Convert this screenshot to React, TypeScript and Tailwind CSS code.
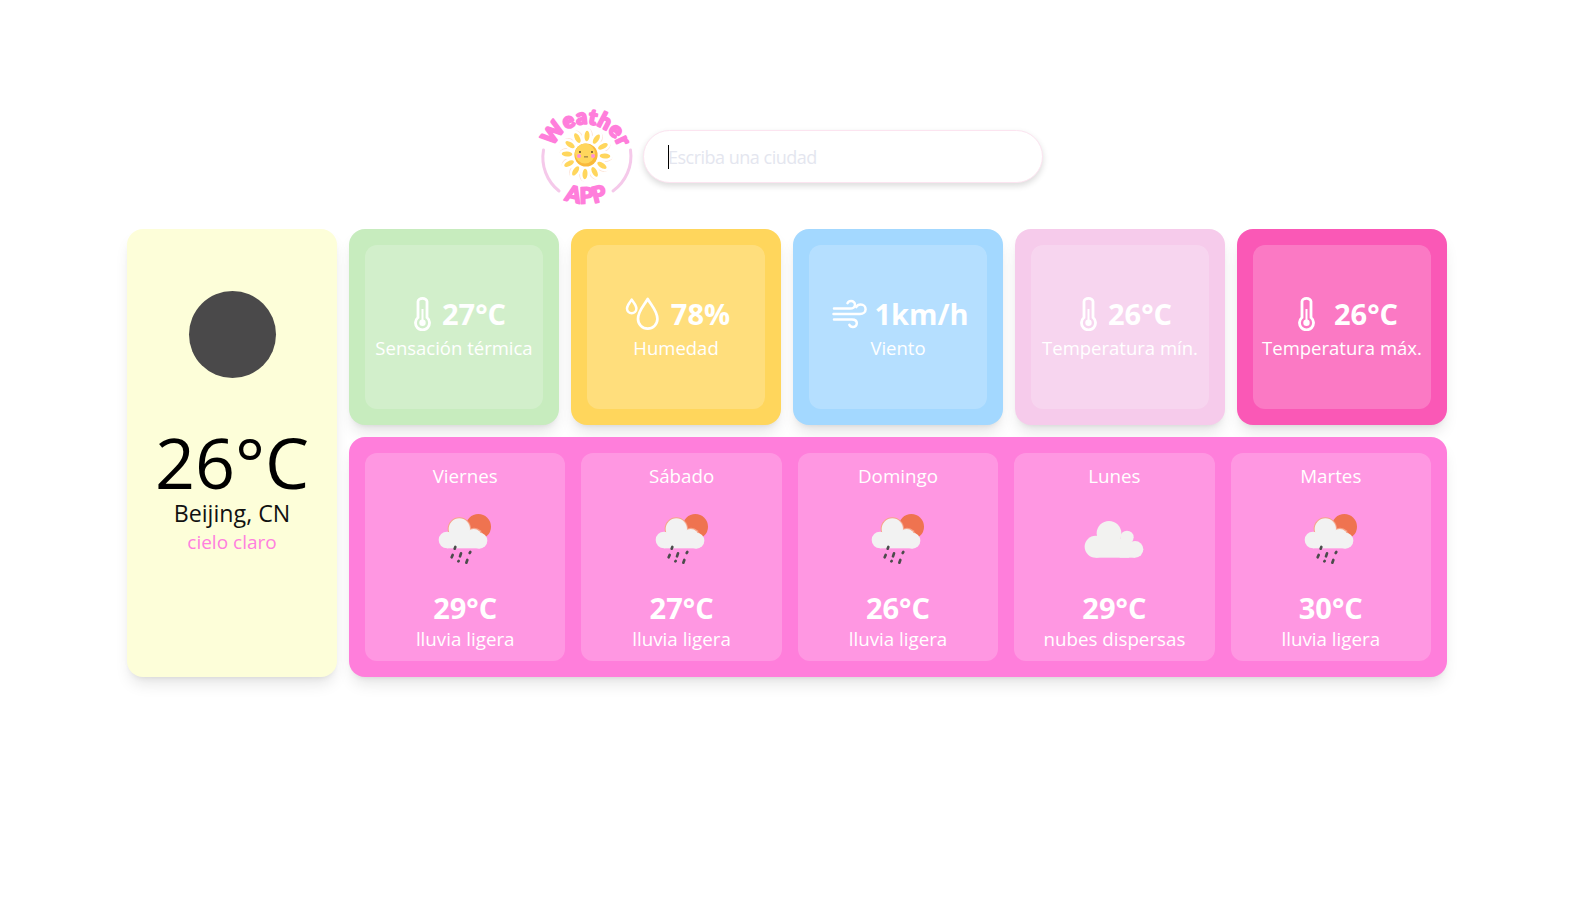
import React from "react";

const stats = [
  { icon: "thermo", value: "27°C", label: "Sensación térmica", bg: "bg-[#c7ecbe]" },
  { icon: "drops", value: "78%", label: "Humedad", bg: "bg-[#ffd65c]" },
  { icon: "wind", value: "1km/h", label: "Viento", bg: "bg-[#a3d8ff]" },
  { icon: "thermo", value: "26°C", label: "Temperatura mín.", bg: "bg-[#f6cbeb]" },
  { icon: "thermoMax", value: "26°C", label: "Temperatura máx.", bg: "bg-[#fa58b6]" },
];

const forecast = [
  { day: "Viernes", temp: "29°C", desc: "lluvia ligera", icon: "rain" },
  { day: "Sábado", temp: "27°C", desc: "lluvia ligera", icon: "rain" },
  { day: "Domingo", temp: "26°C", desc: "lluvia ligera", icon: "rain" },
  { day: "Lunes", temp: "29°C", desc: "nubes dispersas", icon: "cloud" },
  { day: "Martes", temp: "30°C", desc: "lluvia ligera", icon: "rain" },
];

const Thermo = ({ width }: { width: number }) => (
  <svg width={width} height="34" viewBox={`0 0 ${width} 34`} fill="none" className="block">
    <path d="M16 4.600a4.500 3.200 0 0 1 9 0V20.500a7 7 0 1 1 -9 0Z" stroke="white" strokeWidth="2.800" />
    <circle cx="20.500" cy="25.800" r="3.200" fill="white" />
    <rect x="19.500" y="12" width="2" height="12" fill="white" />
  </svg>
);

const StatIcon = ({ name }: { name: string }) => {
  if (name === "thermo") return <Thermo width={40} />;
  if (name === "thermoMax") return <Thermo width={48} />;
  if (name === "drops") {
    return (
      <svg width="49" height="34" viewBox="0 0 49 34" fill="none" className="block">
        <path d="M25.700 2C22 8.500 16 14 16 22a9.700 9.700 0 0 0 19.400 0C35.400 14 29.400 8.500 25.700 2Z" stroke="white" strokeWidth="2.700" strokeLinejoin="round" />
        <path d="M9.700 2.500C8 5.500 5 8 5 11.500a4.700 4.700 0 0 0 9.400 0C14.400 8 11.400 5.500 9.700 2.500Z" stroke="white" strokeWidth="2.500" strokeLinejoin="round" />
      </svg>
    );
  }
  return (
    <svg width="47" height="34" viewBox="-3 0 47 34" fill="none" className="block">
      <path d="M4 11.500H20c3 0 5-1.600 5-3.800 0-2-1.700-3.700-3.900-3.700-1.600 0-3 .8-3.600 2.200" stroke="white" strokeWidth="2.500" strokeLinecap="round" />
      <path d="M3.500 17H30c3.200 0 5.600-2.100 5.600-4.800 0-2.800-2.200-4.700-4.900-4.700-2 0-3.700 1-4.400 2.600" stroke="white" strokeWidth="2.500" strokeLinecap="round" />
      <path d="M4 22.500H22c2.800 0 4.800 1.500 4.800 3.800 0 2.200-1.800 3.700-3.900 3.700-1.600 0-3-.8-3.600-2.200" stroke="white" strokeWidth="2.500" strokeLinecap="round" />
    </svg>
  );
};

// same drawing as the reference icon: 3x units, origin at the crop
const RainIcon = () => (
  <svg width="90" height="70" viewBox="-15 0 270 210" className="block">
    <circle cx="160" cy="65" r="38" fill="#ef7350" />
    <g fill="#f6a58a">
      <circle cx="103" cy="72" r="35" />
      <circle cx="147" cy="95" r="27" />
    </g>
    <g fill="#f2f2f2">
      <circle cx="103" cy="72" r="32" />
      <circle cx="146" cy="96" r="24" />
      <circle cx="66" cy="105" r="25" />
      <circle cx="163" cy="107" r="24" />
      <rect x="66" y="90" width="97" height="40" />
    </g>
    <g stroke="#4b4b4b" strokeWidth="8" strokeLinecap="round">
      <path d="M91 126l-2 5" />
      <path d="M83 150l-3 7" />
      <path d="M108 145l-3 9" />
      <path d="M136 141l-2 3" />
      <path d="M101 168l-1 1" />
      <path d="M127 165l-3 8" />
    </g>
  </svg>
);

const CloudIcon = () => (
  <svg width="90" height="70" viewBox="28 0 270 210" className="block">
    <g fill="#f2f2f0">
      <circle cx="148" cy="85" r="37" />
      <circle cx="202" cy="97" r="20" />
      <circle cx="108" cy="125" r="33" />
      <circle cx="226" cy="133" r="25" />
      <rect x="108" y="100" width="100" height="58" />
      <rect x="180" y="112" width="46" height="46" />
    </g>
  </svg>
);

const Logo = () => (
  <svg width="100" height="104" viewBox="0 0 100 104" className="block shrink-0">
    <defs>
      <path id="logoTop" d="M16 54 A34 34 0 0 1 84 54" />
      <path id="logoBottom" d="M22 93 Q50 106 78 93" />
    </defs>
    <path d="M7.500 46 A43 43 0 0 0 23 87" fill="none" stroke="#f5c9ea" strokeWidth="3" strokeLinecap="round" />
    <path d="M94.500 46 A43 43 0 0 1 77 87" fill="none" stroke="#f5c9ea" strokeWidth="3" strokeLinecap="round" />
    {Array.from({ length: 12 }).map((_, i) => (
      <ellipse key={i} cx="51" cy="32.500" rx="5" ry="8" fill="#fde3d4" transform={`rotate(${i * 30 + 3} 50 51)`} />
    ))}
    {Array.from({ length: 12 }).map((_, i) => (
      <ellipse key={i} cx="50" cy="32" rx="5" ry="8" fill="white" transform={`rotate(${i * 30 + 3} 50 51)`} />
    ))}
    <circle cx="50" cy="51" r="16" fill="white" />
    {Array.from({ length: 12 }).map((_, i) => (
      <ellipse key={i} cx="50" cy="32" rx="2.500" ry="5.300" fill="#ffd65c" transform={`rotate(${i * 30 + 3} 50 51)`} />
    ))}
    <circle cx="50" cy="51" r="11.600" fill="#f9b93a" />
    <circle cx="49" cy="49.500" r="10" fill="#ffd65c" />
    <circle cx="43" cy="52" r="2" fill="#ff8fd8" />
    <circle cx="57" cy="52" r="2" fill="#ff8fd8" />
    <circle cx="44" cy="48" r="0.900" fill="#4b3a2a" />
    <circle cx="56" cy="48" r="0.900" fill="#4b3a2a" />
    <path d="M48 52.500q1 1.500 2 0q1 1.500 2 0" fill="none" stroke="#4b3a2a" strokeWidth="0.700" />
    <text fontFamily="Lato, sans-serif" fontWeight="900" fontSize="21.500" fill="#ff7edb" stroke="#ff7edb" strokeWidth="2" strokeLinejoin="round" textAnchor="middle" letterSpacing="0.200">
      <textPath href="#logoTop" startOffset="50%">Weather</textPath>
    </text>
    <text fontFamily="Lato, sans-serif" fontWeight="900" fontSize="22" fill="#ff7edb" stroke="#ff7edb" strokeWidth="1.800" strokeLinejoin="round" textAnchor="middle" letterSpacing="0.300">
      <textPath href="#logoBottom" startOffset="50%">APP</textPath>
    </text>
  </svg>
);

export default function App() {
  return (
    <div className="min-h-[898px] bg-white pt-[104px] pl-[127px] font-['Open_Sans',sans-serif]">
      <div className="w-[1320px]">
        <header className="ml-[409px] flex h-[104px] items-center gap-[7px]">
          <Logo />
          <div className="relative">
            <input
              placeholder="Escriba una ciudad"
              className="h-[53px] w-[400px] rounded-full border border-[#fce4f0] bg-white pl-[24px] pt-[2px] text-[18px] tracking-[-0.5px] caret-transparent shadow-[0_3px_6px_rgba(0,0,0,0.14)] outline-none placeholder:text-[#e4e6ef]"
            />
            <span className="absolute left-[25px] top-[15px] h-[24px] w-px bg-black" />
          </div>
        </header>

        <main className="mt-[21px] grid h-[448px] grid-cols-[210px_1fr] gap-3">
          <section className="flex flex-col items-center rounded-2xl bg-[#fdfed9] pt-[62px] shadow-lg shadow-black/10">
            <div className="h-[87px] w-[87px] rounded-full bg-[#4a494a]" />
            <p className="mt-[49px] text-[70px] leading-[70px] text-black">26°C</p>
            <p className="text-[23.2px] leading-[32px] text-[#111]">Beijing, CN</p>
            <p className="-mt-[1px] text-[19px] leading-[28px] text-[#ff80df]">cielo claro</p>
          </section>

          <div className="grid grid-rows-[196px_240px] gap-3">
            <div className="grid grid-cols-5 gap-3">
              {stats.map((s) => (
                <div key={s.label} className={`rounded-2xl p-4 shadow-lg shadow-black/10 ${s.bg}`}>
                  <div className="flex h-full flex-col items-center justify-center rounded-xl bg-white/20 pt-[3px] text-white">
                    <div className="flex items-center">
                      <StatIcon name={s.icon} />
                      <span className="text-[29px] font-bold leading-[38px]">{s.value}</span>
                    </div>
                    <span className="mt-[1px] text-[18.5px] leading-[28px]">{s.label}</span>
                  </div>
                </div>
              ))}
            </div>

            <div className="grid grid-cols-5 gap-4 rounded-2xl bg-[#ff7edb] p-4 shadow-lg shadow-black/10">
              {forecast.map((f) => (
                <div key={f.day} className="flex flex-col items-center rounded-xl bg-white/20 pt-[9px] text-white">
                  <span className="text-[18.75px] leading-[28px]">{f.day}</span>
                  <div className="mt-[15px]">{f.icon === "rain" ? <RainIcon /> : <CloudIcon />}</div>
                  <span className="mt-[14px] text-[29px] font-bold leading-[38px]">{f.temp}</span>
                  <span className="-mt-[2px] text-[18.75px] leading-[28px]">{f.desc}</span>
                </div>
              ))}
            </div>
          </div>
        </main>
      </div>
    </div>
  );
}
